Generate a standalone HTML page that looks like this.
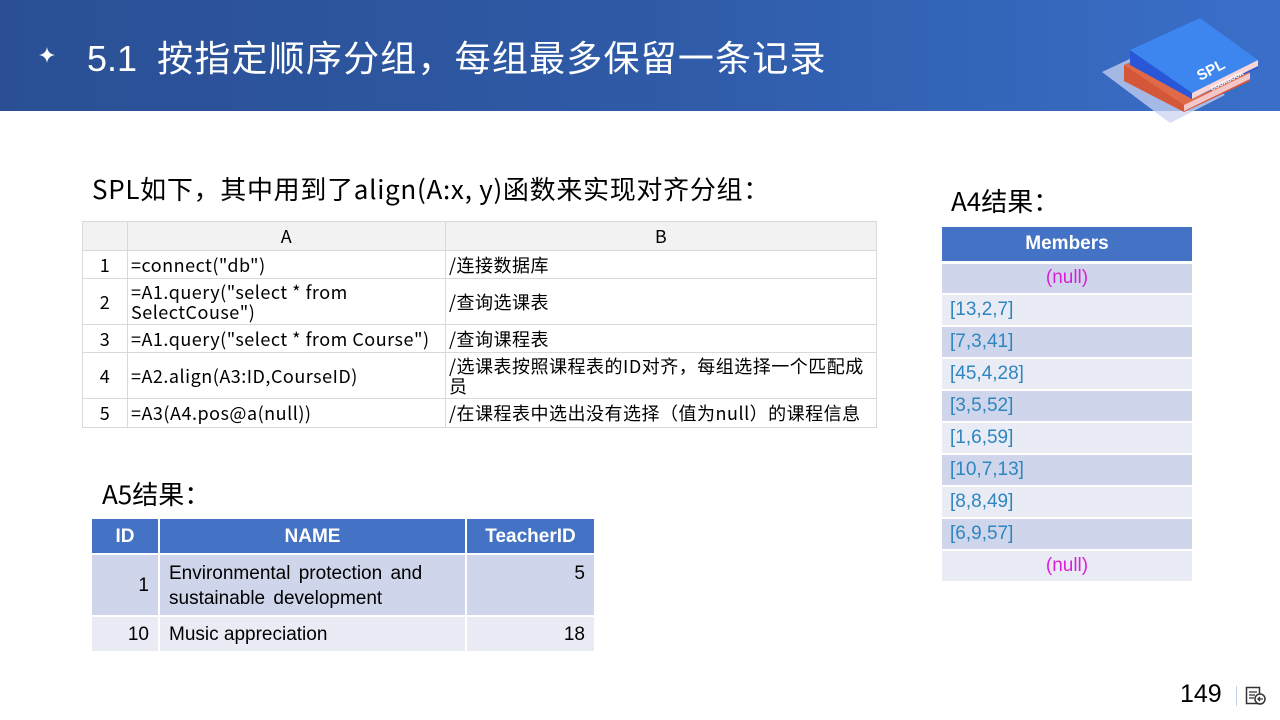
<!DOCTYPE html>
<html><head><meta charset="utf-8"><style>
*{margin:0;padding:0;box-sizing:border-box}
body{width:1280px;height:720px;background:#fff;position:relative;overflow:hidden;font-family:"Liberation Sans","Noto Sans CJK SC",sans-serif;color:#000}
.hdr{position:absolute;left:0;top:0;width:1280px;height:111px;background:linear-gradient(90deg,#2a4f94 0%,#2f5aa6 50%,#3a6fc9 100%)}
.title{position:absolute;left:87px;top:30px;color:#fff;font-size:36px;white-space:nowrap}
.t{position:absolute;white-space:nowrap;font-family:"Noto Sans CJK SC","Liberation Sans",sans-serif}
table{border-collapse:collapse;position:absolute}
#t1{left:82px;top:221px;width:795px;font-size:18px;font-family:"Noto Sans CJK SC",sans-serif;letter-spacing:0.5px}
#t1 td{border:1px solid #d9d9d9;padding:0 3px;line-height:20px;vertical-align:middle}
#t1 tr.h td{background:#f2f2f2;text-align:center}
#t1 td.n{text-align:center;background:#fff}
#t2{left:90px;top:517px;width:506px;font-size:19px}
#t2 td{border:2px solid #fff;padding:0 9px;line-height:25px}
#t2 tr.h td{background:#4472c4;color:#fff;font-weight:bold;text-align:center;height:36px}
#t3{left:942px;top:227px;width:250px;font-size:19px}
#t3 td{border-bottom:2px solid #fff;height:32px;padding:0 8px;color:#2e86c1}
#t3 tr.h td{background:#4472c4;color:#fff;font-weight:bold;text-align:center;height:35px;border-bottom:3px solid #fff}
.d{background:#cfd5ea}.l{background:#e9ebf5}
.nl{color:#d91fd9!important;text-align:center}
</style></head><body>
<div class="hdr"></div>
<svg style="position:absolute;left:38px;top:46px" width="18" height="18" viewBox="0 0 18 18"><path d="M9 1 Q10 8 17 9 Q10 10 9 17 Q8 10 1 9 Q8 8 9 1Z" fill="#fff"/></svg>
<div class="title"><span style="font-family:'Liberation Sans',sans-serif">5.1</span>&nbsp; <span style="font-family:'Noto Sans CJK SC',sans-serif;letter-spacing:1.2px">按指定顺序分组，每组最多保留一条记录</span></div>
<svg style="position:absolute;left:1100px;top:15px" width="160" height="110" viewBox="0 0 160 110">
<polygon points="2,57 55,32 125,80 70,108" fill="#c9d3f2" opacity="0.75"/>
<polygon points="24,50 96,20 150,58 150,66 84,97 24,66" fill="#d4573a"/>
<polygon points="24,50 96,20 150,58 84,90" fill="#e06a48"/>
<polygon points="84,90 150,58 150,64 84,96" fill="#f3c7c7"/>
<polygon points="30,35 100,3 158,45 158,53 92,84 30,50" fill="#2a57d8"/>
<polygon points="30,35 100,3 158,45 92,78" fill="#3d86f0"/>
<polygon points="92,78 158,45 158,51 92,84" fill="#f8d6d6"/>
<text x="100" y="66" fill="#fff" font-size="15" font-weight="bold" font-family="Liberation Sans" transform="rotate(-27 100 66)">SPL</text>
<text x="112" y="76" fill="#fff" font-size="6" font-weight="bold" font-family="Liberation Sans" transform="rotate(-27 112 76)">COOKBOOK</text>
</svg>
<div class="t" style="left:92px;top:170px;font-size:26px;letter-spacing:0.7px">SPL如下，其中用到了align(A:x, y)函数来实现对齐分组：</div>
<table id="t1">
<tr class="h" style="height:29px"><td style="width:45px"></td><td style="width:318px">A</td><td>B</td></tr>
<tr style="height:28px"><td class="n">1</td><td>=connect("db")</td><td>/连接数据库</td></tr>
<tr style="height:46px"><td class="n">2</td><td>=A1.query("select * from SelectCouse")</td><td>/查询选课表</td></tr>
<tr style="height:28px"><td class="n">3</td><td>=A1.query("select * from Course")</td><td>/查询课程表</td></tr>
<tr style="height:46px"><td class="n">4</td><td>=A2.align(A3:ID,CourseID)</td><td>/选课表按照课程表的ID对齐，每组选择一个匹配成<br>员</td></tr>
<tr style="height:29px"><td class="n">5</td><td>=A3(A4.pos@a(null))</td><td>/在课程表中选出没有选择（值为null）的课程信息</td></tr>
</table>
<div class="t" style="left:102px;top:475px;font-size:26px">A5结果：</div>
<table id="t2">
<tr class="h"><td style="width:68px">ID</td><td style="width:307px">NAME</td><td>TeacherID</td></tr>
<tr class="d" style="height:62px"><td style="text-align:right">1</td><td style="vertical-align:top;padding-top:6px;word-spacing:3px">Environmental protection and sustainable development</td><td style="text-align:right;vertical-align:top;padding-top:6px">5</td></tr>
<tr class="l" style="height:36px"><td style="text-align:right">10</td><td>Music appreciation</td><td style="text-align:right">18</td></tr>
</table>
<div class="t" style="left:951px;top:182px;font-size:26px">A4结果：</div>
<table id="t3">
<tr class="h"><td>Members</td></tr>
<tr class="d"><td class="nl">(null)</td></tr>
<tr class="l"><td>[13,2,7]</td></tr>
<tr class="d"><td>[7,3,41]</td></tr>
<tr class="l"><td>[45,4,28]</td></tr>
<tr class="d"><td>[3,5,52]</td></tr>
<tr class="l"><td>[1,6,59]</td></tr>
<tr class="d"><td>[10,7,13]</td></tr>
<tr class="l"><td>[8,8,49]</td></tr>
<tr class="d"><td>[6,9,57]</td></tr>
<tr class="l"><td class="nl">(null)</td></tr>
</table>
<div class="t" style="left:1180px;top:680px;font-size:25px;font-family:'Liberation Sans',sans-serif">149</div>
<div style="position:absolute;left:1236px;top:686px;width:1px;height:20px;background:#c5d3ea"></div>
<svg style="position:absolute;left:1245px;top:686px" width="22" height="20" viewBox="0 0 22 20"><rect x="1.5" y="1.5" width="13" height="16" fill="none" stroke="#333" stroke-width="1.5"/><path d="M4 6h8M4 9h6M4 12h5" stroke="#333" stroke-width="1.3"/><circle cx="15" cy="13" r="5" fill="#fff" stroke="#333" stroke-width="1.5"/><path d="M18 13h-5M15 11l-2 2 2 2" stroke="#333" stroke-width="1.3" fill="none"/></svg>
</body></html>
